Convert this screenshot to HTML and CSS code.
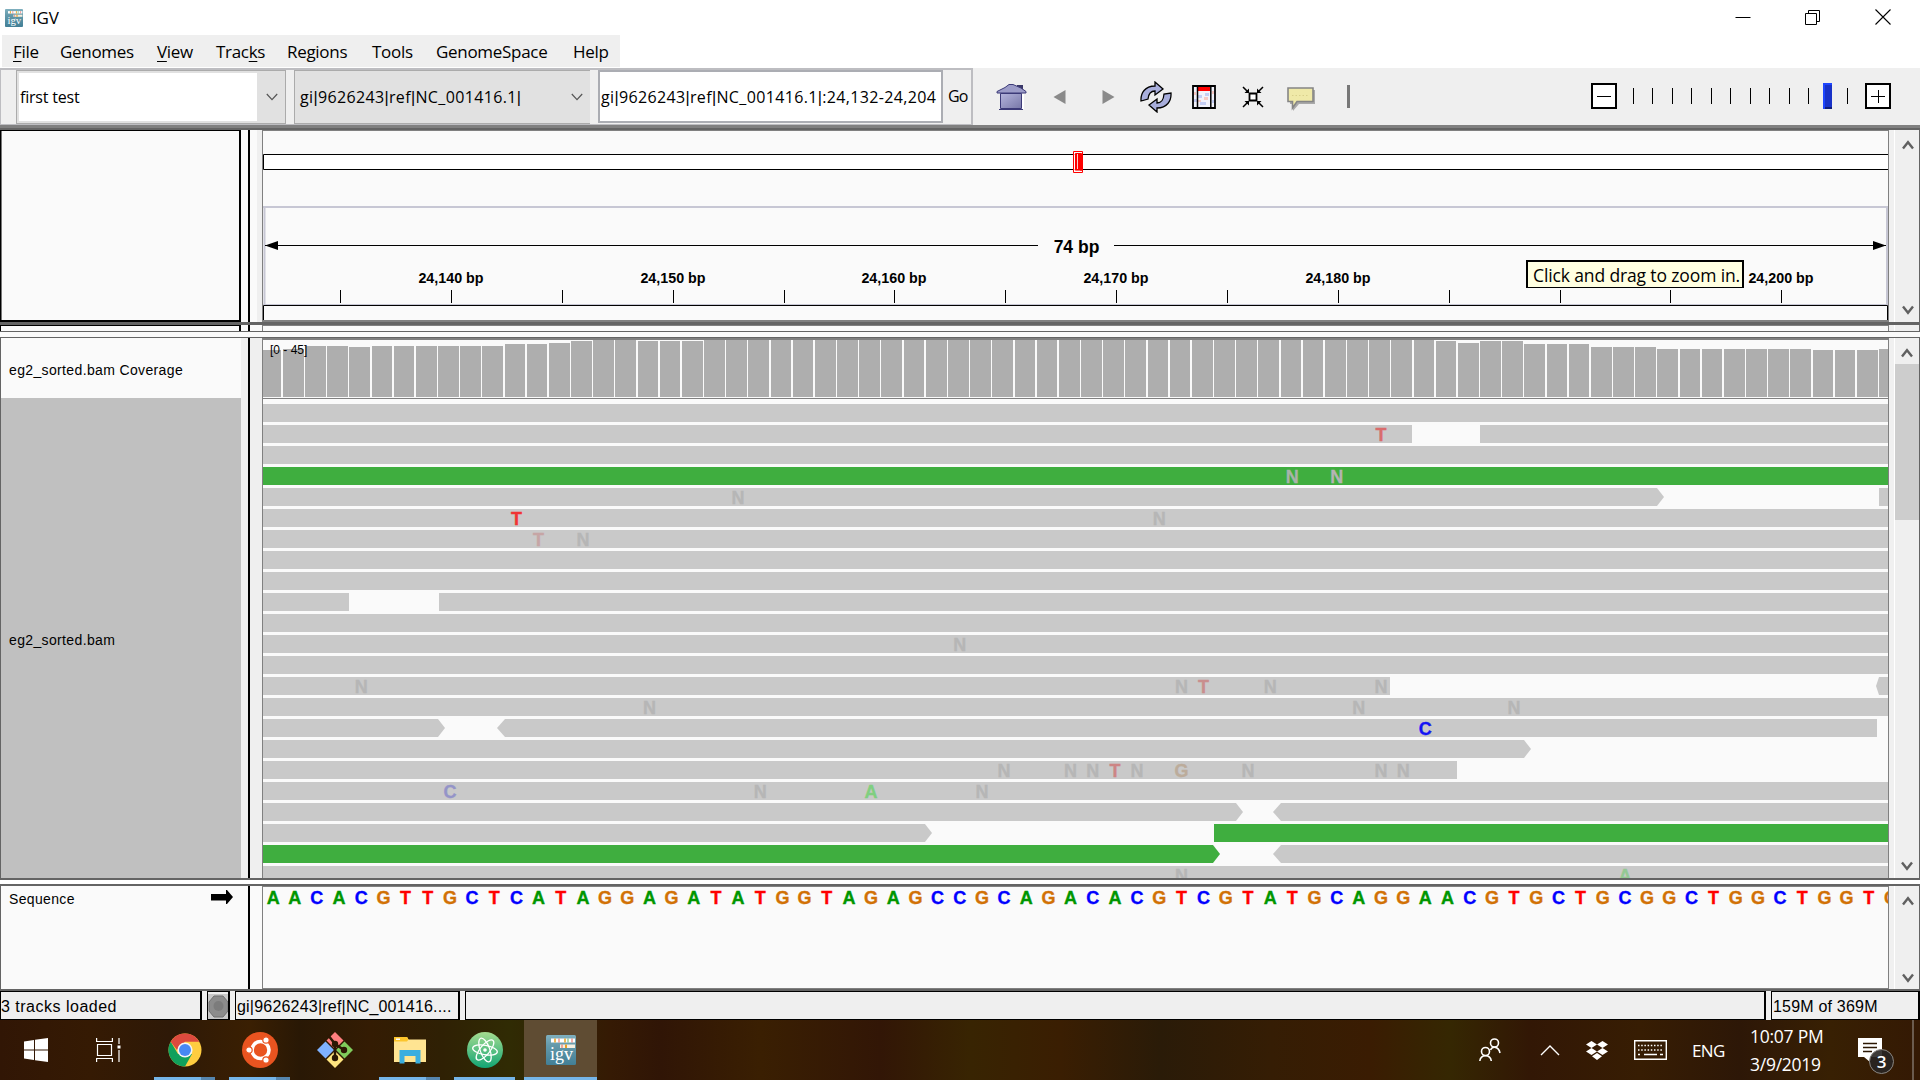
FILE: index.html
```html
<!DOCTYPE html>
<html lang="en">
<head>
<meta charset="utf-8">
<title>IGV</title>
<link rel="stylesheet" href="styles.css">
</head>
<body>
<svg class="defs" width="0" height="0">
  <defs>
    <linearGradient id="igvBg" x1="0" y1="0" x2="0" y2="1"><stop offset="0" stop-color="#7fb0bf"/><stop offset=".35" stop-color="#6499aa"/><stop offset="1" stop-color="#427f96"/></linearGradient>
    <linearGradient id="house" x1="0" y1="0" x2="1" y2="1"><stop offset="0" stop-color="#b4b4dc"/><stop offset="1" stop-color="#7878a8"/></linearGradient>
    <linearGradient id="atomBg" x1="0" y1="0" x2="0" y2="1"><stop offset="0" stop-color="#a5dc90"/><stop offset="1" stop-color="#12a574"/></linearGradient>
    <symbol id="igv" viewBox="0 0 30 30">
      <rect width="30" height="30" rx="1.5" fill="url(#igvBg)"/>
      <rect x="5" y="3.500" width="24" height="4" fill="#fff"/><path d="M9 3.500v4M19 3.500v4" stroke="#e8a020" stroke-width="1.500"/><path d="M13 3.500v4M26 3.500v4" stroke="#e86050"/><path d="M22 3.500v4" stroke="#60b060"/>
      <rect x="14" y="9.500" width="15" height="3.500" fill="#f6efe0"/><path d="M16 9.500v3.500" stroke="#e86050"/><path d="M20 9.500v3.500" stroke="#e8a020" stroke-width="2"/>
      <text x="15.500" y="25" text-anchor="middle" class="igv-word">igv</text>
    </symbol>
    <symbol id="up" viewBox="0 0 12 10"><path d="M1 8.500 6 2.200l5 6.300" fill="none" stroke="#606060" stroke-width="2.400"/></symbol>
    <symbol id="down" viewBox="0 0 12 10"><path d="M1 1.500 6 7.800l5-6.300" fill="none" stroke="#606060" stroke-width="2.400"/></symbol>
    <symbol id="caret" viewBox="0 0 12 8"><path d="M.8 1 6 6.600 11.200 1" fill="none" stroke="#555" stroke-width="1.200"/></symbol>
  </defs>
</svg>

<header class="titlebar">
  <svg class="app-icon" width="18" height="18"><use href="#igv"/></svg>
  <span class="app-name">IGV</span>
  <div class="window-buttons">
    <svg width="16" height="16"><path d="M.5 8.500h15" stroke="#000"/></svg>
    <svg width="16" height="16" fill="none" stroke="#000"><path d="M.5 4.500h11v11H.5zM3.500 4.500v-3h11v11h-3"/></svg>
    <svg width="16" height="16" fill="none" stroke="#000" stroke-width="1.100"><path d="M.5.500l15 15M15.500.500l-15 15"/></svg>
  </div>
</header>

<nav class="menubar">
  <span class="m-file"><u>F</u>ile</span><span class="m-genomes">Genomes</span><span class="m-view"><u>V</u>iew</span><span class="m-tracks">Trac<u>k</u>s</span><span class="m-regions">Regions</span><span class="m-tools">Tools</span><span class="m-space">GenomeSpace</span><span class="m-help">Help</span>
</nav>

<section class="toolbar">
  <div class="locus">
    <div class="combo genome"><span class="field">first test</span><svg width="12" height="8"><use href="#caret"/></svg></div>
    <div class="combo chrom"><span class="text">gi<i>|</i>9626243<i>|</i>ref<i>|</i>NC_001416.1<i>|</i></span><svg width="12" height="8"><use href="#caret"/></svg></div>
    <div class="position"><span class="text">gi<i>|</i>9626243<i>|</i>ref<i>|</i>NC_001416.1<i>|</i>:24,132-24,204</span></div>
    <div class="go">Go</div>
  </div>
  <div class="tools">
    <svg width="32" height="28" viewBox="0 0 32 28"><path d="M6 11v15h22V11" fill="#fff"/><path d="M21 2h6v7h-6z" fill="#3a3868"/><path d="M4.500 10.500h21v15h-21z" fill="url(#house)" stroke="#3c3a78"/><path d="M1 8.500 9 4.500 13 1.500h4L25 5l5 3.500v1.500H1z" fill="#9c9cc8" stroke="#3c3a78"/><path d="M3 26.500h24" stroke="#3c3a78"/></svg>
    <svg width="14" height="16" viewBox="0 0 14 16"><path d="M.5 8 12.500 1v14z" fill="#8a8a8a"/></svg>
    <svg width="14" height="16" viewBox="0 0 14 16"><path d="M13.500 8 1.500 1v14z" fill="#8a8a8a"/></svg>
    <svg width="32" height="32" viewBox="0 0 32 32" fill="#a8aedc" stroke="#000" stroke-width="1.300"><path d="M1 20c-.5-8 4-15 14-15V1l8 7-8 6v-4c-5 0-6.500 3-7 8z"/><path d="M31 12c.5 8-4 15-14 15v4l-8-7 8-6v4c5 0 6.500-3 7-9z"/></svg>
    <svg width="24" height="24" viewBox="0 0 24 24"><path d="M0 0h24v24H0z" fill="#f2f2fb"/><path d="M6 10h4v3H6zM13 8h4v3h-4zM8 17h6v3H8zM2 14h3v3H2zM20 15h3v3h-3z" fill="#c4cdf4"/><path d="M12 12h4v3h-4zM6 15h3v2H6zM2 7h2v3H2zM20 6h2v3h-2z" fill="#f8c8c4"/><path d="M6 2h12v4H6z" fill="#f00"/><path d="M5.500 0v24M18.800 0v24" stroke="#000" stroke-width="1.500"/><path d="M1 1h22v22H1z" fill="none" stroke="#000" stroke-width="1.800"/></svg>
    <svg width="22" height="22" viewBox="0 0 22 22"><path d="M7.500 7.500h7v7h-7z" fill="#fff" stroke="#000" stroke-width="1.800"/><path d="M1 1l5 5M21 1l-5 5M1 21l5-5M21 21l-5-5" stroke="#000" stroke-width="1.500"/><path d="M7 2.500V7H2.500zM15 2.500V7h4.500zM7 19.500V15H2.500zM15 19.500V15h4.500z"/></svg>
    <svg width="28" height="24" viewBox="0 0 28 24"><path d="M3 3h25v14H12l-6 7v-7H3z" fill="#a9a9a9"/><path d="M1 1h25v13.500H10L5.500 21v-6.500H1z" fill="#efe9a8" stroke="#858585" stroke-width="1.600"/><path d="M5 8.500h16" stroke="#d8d08c" stroke-dasharray="1.500 2"/></svg>
    <span class="divider"></span>
  </div>
  <div class="zoom">
    <svg width="26" height="26"><path d="M1 1h24v24H1z" fill="#fff" stroke="#000" stroke-width="2"/><path d="M6 13.500h14" stroke="#000"/></svg>
    <svg class="slider" width="216" height="26"><path d="M.5 5v16M19.500 5v16M39.500 5v16M58.500 5v16M78.500 5v16M97.500 5v16M117.500 5v16M136.500 5v16M156.500 5v16M175.500 5v16M214.500 5v16" stroke="#000"/><path d="M190 0h9v26h-9z" fill="#1832c8"/><path d="M190 26V0h9v2h-7v24z" fill="#1e46ff"/><path d="M192 24h7v2h-7z" fill="#101e78"/></svg>
    <svg width="26" height="26"><path d="M1 1h24v24H1z" fill="#fff" stroke="#000" stroke-width="2"/><path d="M6 13.500h14M13.500 7v13" stroke="#000"/></svg>
  </div>
</section>

<div class="band"></div>

<section class="pane header-pane">
  <div class="names"><div class="frame"></div></div><div class="split"></div><div class="gap"></div>
  <div class="view"><svg id="ruler" width="1625" height="192"></svg><span class="tooltip">Click and drag to zoom in.</span></div>
  <div class="edge"></div>
  <div class="scroll"><svg width="12" height="10"><use href="#up"/></svg><svg width="12" height="10"><use href="#down"/></svg></div><div class="rim"></div>
</section>
<div class="bar3"></div>
<section class="pane sliver">
  <div class="names"><div class="frame"></div></div><div class="split"></div><div class="gap"></div><div class="view"></div><div class="edge"></div><div class="scroll"></div><div class="rim"></div>
</section>
<div class="grip"></div>

<section class="pane data-pane">
  <div class="names"><div class="track-name coverage">eg2_sorted.bam Coverage</div><div class="track-name reads">eg2_sorted.bam</div></div><div class="split"></div><div class="gap"></div>
  <div class="view"><svg id="tracks" width="1625" height="540"></svg></div>
  <div class="edge"></div>
  <div class="scroll"><svg width="12" height="10"><use href="#up"/></svg><div class="thumb"></div><svg width="12" height="10"><use href="#down"/></svg></div><div class="rim"></div>
</section>
<div class="grip grip-thick"></div>

<section class="pane seq-pane">
  <div class="names"><span>Sequence</span><svg width="22" height="15" viewBox="0 0 22 15"><path d="M0 4h15V0h1l6 7-6 7h-1v-3.500H0z"/></svg></div><div class="split"></div><div class="gap"></div>
  <div class="view"><svg id="sequence" width="1625" height="101"></svg></div>
  <div class="edge"></div>
  <div class="scroll"><svg width="12" height="10"><use href="#up"/></svg><svg width="12" height="10"><use href="#down"/></svg></div><div class="rim"></div>
</section>

<footer class="status">
  <div class="s-tracks">3 tracks loaded</div>
  <div class="s-led"><svg width="21" height="25"><path d="M0 0h21v25H0z" fill="#c8c8c8"/><path d="M6 2h9l5 6v9l-5 6H6l-5-6V8z" fill="#8c8c8c" stroke="#707070"/><circle cx="10.500" cy="12" r="5" fill="#7c7c7c"/></svg></div>
  <div class="s-locus">gi|9626243|ref|NC_001416....</div>
  <div class="s-msg"></div>
  <div class="s-mem">159M of 369M</div>
</footer>

<footer class="taskbar">
  <div class="apps">
    <div class="app start"><svg width="24" height="24" viewBox="0 0 24 24" fill="#fff"><path d="M0 3.500 10 2v9.500H0zM11 1.800 24 0v11.500H11zM0 12.500h10V22L0 20.500zM11 12.500h13V24l-13-1.800z"/></svg></div>
    <div class="app view-btn"><svg width="26" height="24" viewBox="0 0 26 24" fill="none" stroke="#fff" stroke-width="1.200"><path d="M1.500 6.500h14v11h-14zM.6 0v3.500h15.800V0M.6 24v-3.500h15.800V24M23 0v6M23 12v12"/><path d="M21.500 7.500h3v3h-3z" fill="#fff" stroke="none"/></svg></div>
    <div class="app run more"><svg width="34" height="34" viewBox="0 0 34 34"><circle cx="17" cy="17" r="16.500" fill="#ffcd40"/><path d="M2.700 8.750A16.500 16.500 0 0 0 17 33.500L24 21 10 21z" fill="#11a05c"/><path d="M2.700 8.750A16.500 16.500 0 0 1 31.300 8.750H17L9 17z" fill="#dc4a3e"/><circle cx="17" cy="17" r="7.600" fill="#f4f4f4"/><circle cx="17" cy="17" r="6" fill="#4688f4"/></svg></div>
    <div class="app run more"><svg width="36" height="36" viewBox="0 0 36 36"><circle cx="18" cy="18" r="18" fill="#e95420"/><circle cx="18.500" cy="18" r="8.500" fill="none" stroke="#fff" stroke-width="3.600"/><g fill="#fff" stroke="#e95420" stroke-width="1.200"><circle cx="7" cy="18" r="3.200"/><circle cx="24" cy="8" r="3.200"/><circle cx="24" cy="28" r="3.200"/></g></svg></div>
    <div class="app"><svg width="36" height="36" viewBox="0 0 36 36"><path d="M18 0l8.500 8.500L18 17 9.500 8.500z" fill="#ff7f7f"/><path d="M8.500 9.500l8.500 8.500-8.500 8.500L0 18z" fill="#7fb2ff"/><path d="M27.500 9.500 36 18l-8.500 8.500L19 18z" fill="#80cc5c"/><path d="M18 19l8.500 8.500L18 36l-8.500-8.500z" fill="#ffe57f"/><path d="M11 3l7 9v15M18 12l9 6" fill="none" stroke="#2c1804" stroke-width="2.500"/><circle cx="18" cy="12" r="3.200" fill="#2c1804"/><circle cx="27" cy="18" r="3.200" fill="#2c1804"/><circle cx="18" cy="26" r="3.200" fill="#2c1804"/></svg></div>
    <div class="app run more"><svg width="32" height="28" viewBox="0 0 32 28"><path d="M0 1h13l1.500 2.500H32V26H0z" fill="#ffe492"/><path d="M0 1h13l1.500 2.500L13 5.500H0z" fill="#fcc52c"/><path d="M2 2.500h4v1.500H2z" fill="#fff"/><path d="M5.500 27.500V14h21v13.500h-5V20h-11v7.500z" fill="#3aaee0"/></svg></div>
    <div class="app run"><svg width="36" height="36" viewBox="0 0 36 36"><circle cx="18" cy="18" r="18" fill="url(#atomBg)"/><g fill="none" stroke="#fff" stroke-width="1.300"><ellipse cx="18" cy="18" rx="12.500" ry="4.800" transform="rotate(10 18 18)"/><ellipse cx="18" cy="18" rx="12.500" ry="4.800" transform="rotate(70 18 18)"/><ellipse cx="18" cy="18" rx="12.500" ry="4.800" transform="rotate(130 18 18)"/></g><circle cx="18" cy="18" r="1.800" fill="#fff"/></svg></div>
    <div class="app run active"><svg width="30" height="30"><use href="#igv"/></svg></div>
  </div>
  <div class="tray">
    <svg class="t-people" width="22" height="24" viewBox="0 0 22 24" fill="none" stroke="#fff" stroke-width="1.600"><circle cx="15.500" cy="5" r="4"/><path d="M11.500 12c2-4 8-4 9.500 3"/><circle cx="6.500" cy="13.500" r="4"/><path d="M.8 23c1-7 10.500-7 11.500 0"/></svg>
    <svg class="t-chev" width="20" height="11" viewBox="0 0 20 11" fill="none" stroke="#fff" stroke-width="1.400"><path d="M1 10l9-9 9 9"/></svg>
    <svg class="t-drop" width="22" height="19" viewBox="0 0 22 19" fill="#fff"><path d="M5.500 0 11 3.500 5.500 7 0 3.500zM16.500 0 22 3.500 16.500 7 11 3.500zM5.500 7 11 10.500 5.500 14 0 10.500zM16.500 7l5.500 3.500-5.500 3.500L11 10.500zM11 12l5 3.300-5 3.700-5-3.700z"/></svg>
    <svg class="t-key" width="33" height="20" viewBox="0 0 33 20" fill="none" stroke="#fff"><path d="M.7.700h31.600v18.600H.7z" stroke-width="1.400"/><path d="M4 5.500h25M4 10h25" stroke-width="1.500" stroke-dasharray="1.500 1.700"/><path d="M4 14.500h2M10 14.500h13M26 14.500h3" stroke-width="1.500"/></svg>
    <span class="t-lang">ENG</span>
    <div class="t-clock"><span>10:07 PM</span><span>3/9/2019</span></div>
    <div class="t-note"><svg width="24" height="24" viewBox="0 0 24 24"><path d="M0 0h24v19H12v5l-6-5H0z" fill="#fff"/><path d="M5 5.500h14M5 9.500h14M5 13.500h9" stroke="#2c1804" stroke-width="1.300"/></svg><span class="badge">3</span></div>
    <span class="peek"></span>
  </div>
</footer>
<script src="app.js"></script>
</body>
</html>
```
FILE: styles.css
```css
* { box-sizing: border-box; }
body { margin: 0; width: 1920px; height: 1080px; overflow: hidden; background: #fff; color: #000; font-family: "Open Sans", "Noto Sans", sans-serif; font-size: 16px; display: flex; flex-direction: column; }
body > * { flex: none; }
svg { display: block; flex: none; }
.defs { position: absolute; }
.igv-word { font: 18px "Liberation Serif", serif; fill: #fff; }

.titlebar { height: 35px; display: flex; align-items: center; padding: 0 11px 0 5px; }
.app-icon { margin-right: 9px; }
.app-name { font-size: 17px; line-height: 20px; letter-spacing: -.2px; }
.window-buttons { margin-left: auto; display: flex; gap: 54px; padding: 0 0 2px; margin-right: 18px; }

.menubar { height: 32px; width: 618px; margin: 0 0 1px 2px; padding: 1px 0 0 11px; background: #efefef; display: flex; font-size: 17px; line-height: 32px; white-space: nowrap; letter-spacing: -.3px; }
.menubar u { text-underline-offset: 3px; text-decoration-thickness: 1px; }
.m-file { width: 47px; }
.m-genomes { width: 97px; }
.m-view { width: 59px; }
.m-tracks { width: 71px; }
.m-regions { width: 85px; }
.m-tools { width: 64px; }
.m-space { width: 137px; }

.toolbar { height: 57px; background: #efefef; display: flex; align-items: flex-start; }
.toolbar i { font: 16px "Liberation Sans", sans-serif; }
.locus { width: 973px; height: 57px; border: solid #bdbdc1; border-width: 2px 2px 1px 1px; display: flex; padding-left: 15px; }
.combo { height: 54px; border: 1px solid #ababab; background: #e1e1e1; display: flex; align-items: center; }
.genome { width: 270px; margin-right: 8px; padding-left: 2px; }
.genome .field { width: 238px; height: 48px; line-height: 48px; background: #fff; padding-left: 1px; margin-right: 9px; letter-spacing: -.2px; }
.chrom { width: 296px; padding-left: 5px; margin-right: 8px; border-right: 0; }
.chrom svg { margin-left: auto; margin-right: 7px; }
.text { letter-spacing: .35px; white-space: nowrap; }
.position { width: 345px; height: 53px; border: 2px solid #abadb3; background: #fff; display: flex; align-items: center; padding-left: 1px; }
.go { line-height: 53px; padding-left: 5px; letter-spacing: -.8px; }
.tools { display: flex; height: 57px; align-items: center; padding: 0 0 0 23px; }
.tools svg:nth-child(2) { margin-left: 25px; }
.tools svg:nth-child(3) { margin-left: 34px; }
.tools svg:nth-child(4) { margin-left: 25px; }
.tools svg:nth-child(5) { margin-left: 20px; }
.tools svg:nth-child(6) { margin-left: 26px; }
.tools svg:nth-child(7) { margin: 5px 0 0 23px; }
.divider { width: 3px; height: 23px; background: #777; margin-left: 32px; }
.zoom { margin: 15px 29px 0 auto; display: flex; }
.slider { margin: 0 16px; }

.band { height: 5px; background: #646464; border-top: 3px solid #808080; }
.bar3 { height: 3px; background: #646464; }
.grip { height: 7px; background: #fafafa; border: solid #646464; border-width: 1px 0; }
.grip-thick { height: 8px; background: #fff; border-width: 2px 0; }

.pane { display: grid; grid-template-columns: 248px 2px 12px 1627px 6px 24px 1px; }
.split { background: #000; }
.gap { background: #fafafa; }
.view { background: #fafafa; border: solid #808080; border-width: 0 1px; overflow: hidden; position: relative; }
.edge { background: #f0f0f0; border-right: 1px solid #fff; }
.scroll { background: #efefef; display: flex; flex-direction: column; align-items: center; justify-content: space-between; padding-left: 1px; }
.rim { background: #646464; }
.names { background: #fafafa; }
.pane text { font-family: "Liberation Sans", Arial, sans-serif; }
.base { stroke-width: .35px; }

.header-pane { height: 192px; }
.header-pane .frame { width: 241px; height: 192px; border: solid #000; border-width: 1px 2px 2px 1px; box-shadow: inset 1px 0 #777; }
.header-pane .view { border-bottom: 2px solid #808080; border-top: 1px solid #808080; }
.header-pane .view svg { margin-top: -1px; }
.header-pane .gap { border-right: 5px solid #efefef; }
.header-pane .scroll { padding: 10px 0 7px 1px; }
.tooltip { position: absolute; left: 1263px; top: 129px; width: 218px; height: 28px; background: #ffffe1; border: 2px solid #000; border-bottom-width: 1px; padding-left: 5px; font-size: 17.500px; line-height: 27px; white-space: nowrap; letter-spacing: -.13px; }

.sliver { height: 6px; }
.sliver .frame { width: 241px; height: 6px; border: solid #000; border-width: 1px 2px 0 1px; }
.sliver .view { border-top: 1px solid #808080; }

.data-pane { height: 540px; }
.data-pane .names, .seq-pane .names { border-left: 1px solid #646464; }
.data-pane .names { background: #efefef; }
.data-pane .gap { background: #efefef; }
.data-pane .view { border-top: 2px solid #808080; }
.data-pane .view svg { margin-top: -2px; }
.track-name { width: 240px; padding-left: 8px; font: 14px "Liberation Sans", Arial, sans-serif; letter-spacing: .36px; display: flex; align-items: center; }
.coverage { height: 60px; background: #fafafa; padding-top: 4px; }
.reads { height: 480px; background: #c0c0c0; padding-top: 4px; }
.data-pane .scroll { padding: 10px 0 7px; justify-content: flex-start; }
.thumb { width: 24px; height: 156px; background: #cdcdcd; margin: 6px 0 auto; }

.seq-pane { height: 105px; border-bottom: 2px solid #646464; }
.seq-pane .view { border-width: 1px; }
.seq-pane .names { display: flex; justify-content: space-between; padding: 4px 15px 0 8px; font: 14px/18px "Liberation Sans", Arial, sans-serif; letter-spacing: .35px; }
.seq-pane .scroll { padding: 10px 0 6px 1px; }

.status { height: 29px; background: #efefef; display: flex; gap: 5px; font: 16px/29px "Liberation Sans", Arial, sans-serif; }
.status > div { border: 1px solid #000; border-right-width: 2px; height: 29px; white-space: nowrap; }
.s-tracks { width: 202px; letter-spacing: .5px; }
.s-led { width: 23px; padding-top: 2px; overflow: hidden; }
.s-locus { width: 225px; padding-left: 1px; letter-spacing: .2px; }
.s-msg { width: 1301px; }
.s-mem { width: 149px; padding-left: 1px; letter-spacing: .2px; }

.taskbar { height: 60px; display: flex; justify-content: space-between; color: #fff; background: linear-gradient(90deg, #311605 0, #351a03 90px, #2e1907 170px, #3a1f02 250px, #291805 300px, #341c03 370px, #2f2004 440px, #302b04 510px, #351a04 610px, #301506 660px, #3a1f02 760px, #321606 880px, #382402 970px, #3a1e02 1060px, #2a1b08 1160px, #351d04 1270px, #3a1c02 1370px, #352702 1450px, #321705 1530px, #371d03 1640px, #2d1707 1740px, #382003 1830px, #341904 1920px); }
.apps { display: flex; }
.app { width: 75px; height: 60px; display: flex; align-items: center; justify-content: center; position: relative; }
.start { width: 72px; }
.view-btn { width: 75px; padding-right: 2px; }
.run::after { content: ""; position: absolute; bottom: 0; left: 7px; width: 61px; height: 3px; background: #75b5e8; }
.more::after { background: linear-gradient(90deg, #75b5e8 47px, #5686ae 47px); }
.apps .active { width: 73px; margin-left: 2px; background: #5f4c33; }
.active::after { left: 0; width: 73px; }
.tray { display: flex; align-items: center; font-size: 17px; }
.t-people { margin-right: 39px; }
.t-chev { margin-right: 26px; }
.t-drop { margin-right: 26px; }
.t-key { margin-right: 25px; }
.t-lang { width: 58px; letter-spacing: -.6px; }
.t-clock { width: 108px; display: flex; flex-direction: column; line-height: 28px; font-size: 17.500px; letter-spacing: -.25px; }
.t-note { width: 54px; position: relative; }
.badge { position: absolute; left: 11px; top: 11px; width: 25px; height: 25px; border-radius: 50%; background: rgba(40, 37, 34, .9); border: 1px solid #8a8682; text-align: center; font-size: 17px; line-height: 23px; font-weight: 600; }
.peek { width: 2px; height: 60px; background: #6b5b4e; margin-right: 6px; }
```
FILE: app.js
```js
const STEP = 22.17;
const SEQ = "AACACGTTGCTCATAGGAGATATGGTAGAGCCGCAGACACGTCGTATGCAGGAACGTGCTGCGGCTGGCTGGTG";
const BASE = { A: "#009600", C: "#0000ff", G: "#d17105", T: "#ff0000" };
const READ = "#c9c9c9", GREEN = "#3fae3f", N = "#b6b6b6";
const ORIGIN = 263;
const center = k => 9.5 + STEP * k + (k === 0 ? .8 : 0);
const letter = (c, k, y, fill) => `<text class="base" x="${center(k).toFixed(1)}" y="${y}" text-anchor="middle" font-size="18" font-weight="700" fill="${fill}" stroke="${fill}">${c}</text>`;

// Ruler
let r = `<path d="M0 24.500h1625v15H0z" fill="#fff"/><path d="M1625 24.500H.5v15H1625" fill="none" stroke="#000"/>
<path d="M810.500 21.500h9v21h-9z" fill="none" stroke="#f00"/><path d="M812.500 23.500h6v17h-6z" fill="#f00" stroke="#f00"/><path d="M811.500 22v19h6M814.500 24v15" fill="none" stroke="#fff" stroke-width=".8"/>
<path d="M0 77h1625" stroke="#c7c7d4" stroke-width="2"/><path d="M1.500 78v96M1624 78v96" stroke="#c7c7d4" stroke-width="2"/><path d="M0 174.500h1625" stroke="#c7c7d4"/>
<path d="M2 115.500h773M851 115.500h772" stroke="#000"/><path d="M2 115.500 15 111v9zM1623 115.500 1610 111v9z"/>
<text x="813.500" y="122.500" text-anchor="middle" font-size="17.500" font-weight="700">74 bp</text>
<path d="M.5 191V175.500h1624V191" fill="none" stroke="#000"/>`;
for (let i = 0; i < 14; i++) {
  const x = Math.floor(77.700 + i * 5 * STEP) + .5;
  r += `<path d="M${x} 160v13" stroke="#000"/>`;
  if (i % 2 && i !== 11) r += `<text x="${x - .5}" y="153" text-anchor="middle" font-size="14.300" font-weight="700">${(24135 + i * 5).toLocaleString("en-US")} bp</text>`;
}
document.getElementById("ruler").innerHTML = r;

// Coverage: [number of bars, gap above the bars]
const cover = [[1, 12], [1, 11], [2, 8], [1, 9], [6, 8], [2, 6], [1, 5], [1, 3], [2, 2], [3, 3], [33, 2], [1, 3], [1, 5], [2, 3], [3, 6], [3, 9], [7, 11], [3, 12], [1, 11]];
let t = "", k = 0;
for (const [n, top] of cover) for (let j = 0; j < n; j++, k++) {
  const a = k ? Math.round(19.900 + STEP * (k - 1)) : 0;
  const b = Math.floor(18.900 + STEP * k);
  t += `<path d="M${a} ${top}h${b - a}V59H${a}z" fill="#aeaeae"/>`;
}
t += `<path d="M0 60.500h1625" stroke="#808080"/><text x="7" y="16" font-size="12">[0 - 45]</text>`;

// Reads: [start, end, colour, start arrow, end arrow] in window pixels
const L = 263, R = 1888, full = [[L, R]];
const rows = Array.from({ length: 23 }, () => full);
rows[1] = [[L, 1412], [1480, R]];
rows[3] = [[L, R, GREEN]];
rows[4] = [[L, 1664, READ, 0, 1], [1879, R]];
rows[9] = [[L, 349], [439, R]];
rows[13] = [[L, 1390], [1876, R, READ, 1]];
rows[15] = [[L, 445, READ, 0, 1], [497, 1877, READ, 1]];
rows[16] = [[L, 1531, READ, 0, 1]];
rows[17] = [[L, 1457]];
rows[19] = [[L, 1243, READ, 0, 1], [1273, R, READ, 1]];
rows[20] = [[L, 932, READ, 0, 1], [1214, R, GREEN]];
rows[21] = [[L, 1220, GREEN, 0, 1], [1273, R, READ, 1]];
rows.forEach((row, i) => {
  const y = 66 + 21 * i;
  for (const [s, e, fill = READ, back, fwd] of row) {
    const a = s - ORIGIN, b = e - ORIGIN, p = back ? (s > 1800 ? 3 : 8) : 0, q = fwd ? 7 : 0;
    t += `<path d="M${a + p} ${y}H${b - q}L${b} ${y + 9}L${b - q} ${y + 18}H${a + p}L${a} ${y + 9}z" fill="${fill}"/>`;
  }
});
const calls = [
  [1, 50, "T", "#d96c6c"], [3, 46, "N", "#a9b3a9"], [3, 48, "N", "#b4b4b4"], [4, 21, "N"], [5, 11, "T", "#f03434"], [5, 40, "N"],
  [6, 12, "T", "#c6a5a5"], [6, 14, "N"], [11, 31, "N"], [13, 4, "N"], [13, 41, "N"], [13, 42, "T", "#c98e8e"], [13, 45, "N"], [13, 50, "N"],
  [14, 17, "N"], [14, 49, "N"], [14, 56, "N"], [15, 52, "C", "#1414f4"], [17, 33, "N"], [17, 36, "N"], [17, 37, "N"], [17, 38, "T", "#cd8585"],
  [17, 39, "N"], [17, 41, "G", "#bcac9b"], [17, 44, "N"], [17, 50, "N"], [17, 51, "N"], [18, 8, "C", "#9494c8"], [18, 22, "N"], [18, 27, "A", "#80cf80"],
  [18, 32, "N"], [22, 41, "N"], [22, 61, "A", "#94c894"]
];
for (const [row, cell, c, fill = N] of calls) t += letter(c, cell, 82 + 21 * row, fill);
document.getElementById("tracks").innerHTML = t;

document.getElementById("sequence").innerHTML = [...SEQ].map((c, i) => letter(c, i, 17, BASE[c])).join("");
```
